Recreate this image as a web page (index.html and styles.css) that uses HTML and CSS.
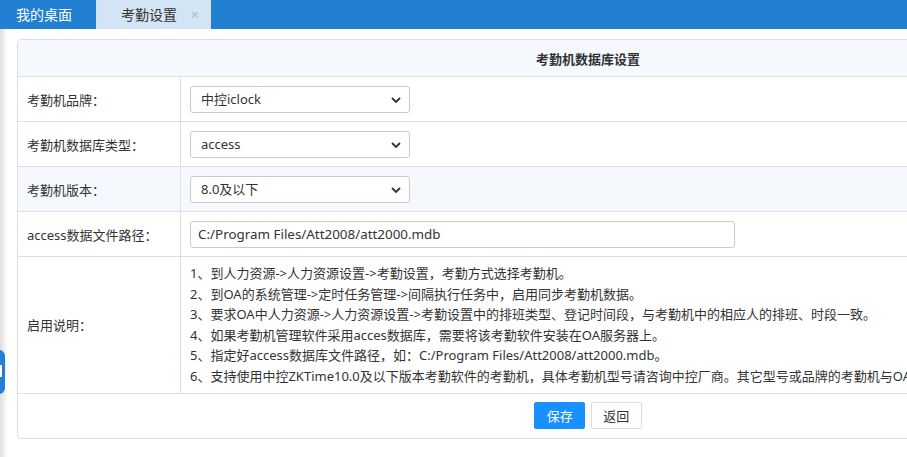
FILE: index.html
```html
<!DOCTYPE html>
<html lang="zh-CN">
<head>
  <meta charset="UTF-8">
  <title>考勤设置</title>
  <link rel="stylesheet" href="styles.css">
</head>
<body>
  <div class="tabs">
    <div class="tab">我的桌面</div>
    <div class="tab active">考勤设置 <span class="close">×</span></div>
  </div>

  <div class="main">
    <div class="side-handle"><span></span></div>

    <div class="card">
      <table class="form">
        <tr class="head">
          <th colspan="2">考勤机数据库设置</th>
        </tr>
        <tr>
          <td class="label">考勤机品牌：</td>
          <td>
            <span class="select">
              <select><option>中控iclock</option></select>
              <svg viewBox="0 0 10 6" width="10" height="6"><path d="M1 1 L5 5 L9 1" fill="none" stroke="#333" stroke-width="1.8"/></svg>
            </span>
          </td>
        </tr>
        <tr>
          <td class="label">考勤机数据库类型：</td>
          <td>
            <span class="select">
              <select><option>access</option></select>
              <svg viewBox="0 0 10 6" width="10" height="6"><path d="M1 1 L5 5 L9 1" fill="none" stroke="#333" stroke-width="1.8"/></svg>
            </span>
          </td>
        </tr>
        <tr class="alt">
          <td class="label">考勤机版本：</td>
          <td>
            <span class="select">
              <select><option>8.0及以下</option></select>
              <svg viewBox="0 0 10 6" width="10" height="6"><path d="M1 1 L5 5 L9 1" fill="none" stroke="#333" stroke-width="1.8"/></svg>
            </span>
          </td>
        </tr>
        <tr>
          <td class="label">access数据文件路径：</td>
          <td><input class="text" type="text" value="C:/Program Files/Att2008/att2000.mdb"></td>
        </tr>
        <tr class="tall">
          <td class="label">启用说明：</td>
          <td class="notes">
            1、到人力资源-&gt;人力资源设置-&gt;考勤设置，考勤方式选择考勤机。<br>
            2、到OA的系统管理-&gt;定时任务管理-&gt;间隔执行任务中，启用同步考勤机数据。<br>
            3、要求OA中人力资源-&gt;人力资源设置-&gt;考勤设置中的排班类型、登记时间段，与考勤机中的相应人的排班、时段一致。<br>
            4、如果考勤机管理软件采用acces数据库，需要将该考勤软件安装在OA服务器上。<br>
            5、指定好access数据库文件路径，如：C:/Program Files/Att2008/att2000.mdb。<br>
            6、支持使用中控ZKTime10.0及以下版本考勤软件的考勤机，具体考勤机型号请咨询中控厂商。其它型号或品牌的考勤机与OA集成请联系我们。
          </td>
        </tr>
        <tr class="actions">
          <td colspan="2">
            <button class="btn primary">保存</button>
            <button class="btn">返回</button>
          </td>
        </tr>
      </table>
    </div>
  </div>
</body>
</html>
```

FILE: styles.css
```css
body {
  margin: 0;
  overflow: hidden;
  background: #fff;
  color: #333;
  font-family: "Noto Sans", "Noto Sans CJK SC", sans-serif;
  font-size: 13px;
}

.tabs {
  height: 29px;
  background: #2180d1;
  display: flex;
}

.tab {
  height: 29px;
  line-height: 29px;
  padding: 0 24px 0 16px;
  color: #fff;
  font-size: 14px;
}

.tab.active {
  padding: 0 12px 0 25px;
  background: #d3e5f5;
  color: #333;
}

.tab .close {
  margin-left: 10px;
  color: #b5c3cf;
  font-size: 14px;
  font-weight: bold;
}

.main {
  position: relative;
  height: 428px;
  padding: 10px 0 0 17px;
  background: linear-gradient(to right, #dedede 0, #f2f2f2 5px, #fff 7px);
}

.side-handle {
  position: absolute;
  left: -10px;
  top: 321px;
  width: 15px;
  height: 44px;
  background: #2180d1;
  border-radius: 6px;
}

.side-handle span {
  position: absolute;
  left: 10px;
  top: 15px;
  width: 2px;
  height: 12px;
  background: #fff;
}

.card {
  width: 1140px;
  border: 1px solid #dcdfe4;
  border-radius: 4px;
  overflow: hidden;
  background: #fff;
}

.form {
  width: 100%;
  border-collapse: collapse;
}

.form td,
.form th {
  border-top: 1px solid #dcdfe4;
  padding: 0 9px;
  height: 44px;
  text-align: left;
}

.form tr:first-child th {
  border-top: 0;
}

.form .head th {
  height: 36px;
  background: #f5f9fe;
  text-align: center;
  font-weight: 600;
  font-size: 13px;
}

.form .alt td {
  background: #f5f9fe;
}

.form .label {
  width: 144px;
  border-right: 1px solid #dcdfe4;
}

.select {
  position: relative;
  display: inline-block;
  vertical-align: middle;
}

.select select {
  appearance: none;
  -webkit-appearance: none;
  width: 220px;
  height: 27px;
  padding: 0 10px;
  border: 1px solid #c9c9c9;
  border-radius: 3px;
  background: #fff;
  color: #333;
  font-family: "Noto Sans", "Noto Sans CJK SC", sans-serif;
  font-size: 13px;
}

.select svg {
  position: absolute;
  right: 9px;
  top: 11px;
}

.text {
  box-sizing: border-box;
  width: 545px;
  height: 27px;
  padding: 0 7px;
  border: 1px solid #c9c9c9;
  border-radius: 3px;
  color: #333;
  font-family: "Noto Sans", "Noto Sans CJK SC", sans-serif;
  font-size: 13.4px;
  vertical-align: middle;
}

.form .notes {
  padding-top: 6px;
  padding-bottom: 6px;
  height: auto;
  line-height: 20.6px;
  white-space: nowrap;
}

.form .actions td {
  text-align: center;
}

.btn {
  height: 27px;
  width: 51px;
  margin: 0 1px;
  border: 1px solid #dcdcdc;
  border-radius: 2px;
  background: #fff;
  color: #333;
  font-family: "Noto Sans", "Noto Sans CJK SC", sans-serif;
  font-size: 13px;
  cursor: pointer;
}

.btn.primary {
  background: #1890ff;
  border-color: #1890ff;
  color: #fff;
}
```
